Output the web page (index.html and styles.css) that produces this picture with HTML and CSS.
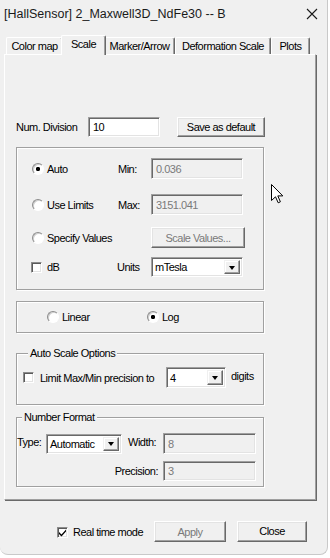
FILE: index.html
```html
<!DOCTYPE html>
<html>
<head>
<meta charset="utf-8">
<link rel="stylesheet" href="styles.css">
</head>
<body>
<div class="window">
  <div class="titlebar">
    <span class="title">[HallSensor] 2_Maxwell3D_NdFe30 -- B</span>
    <svg class="close" width="12" height="12" viewBox="0 0 12 12"><path d="M1 1 L11 11 M11 1 L1 11" stroke="#1a1a1a" stroke-width="1.1" fill="none"/></svg>
  </div>
  <div class="tabs">
    <div class="tab w1">Color map</div>
    <div class="tab sel w2">Scale</div>
    <div class="tab w3">Marker/Arrow</div>
    <div class="tab w4">Deformation Scale</div>
    <div class="tab w5">Plots</div>
  </div>
  <div class="panel">
    <div class="numrow">
      <span class="numlabel">Num. Division</span>
      <div class="field white numfield">10</div>
      <div class="btn savebtn">Save as default</div>
    </div>

    <div class="group g1">
      <div class="row r1">
        <div class="opt"><span class="radio checked"></span><span>Auto</span></div>
        <span class="lbl">Min:</span>
        <div class="field dis wide">0.036</div>
      </div>
      <div class="row r2">
        <div class="opt"><span class="radio"></span><span>Use Limits</span></div>
        <span class="lbl">Max:</span>
        <div class="field dis wide">3151.041</div>
      </div>
      <div class="row r3">
        <div class="opt"><span class="radio"></span><span>Specify Values</span></div>
        <span class="lbl"></span>
        <div class="btn dis scalebtn">Scale Values...</div>
      </div>
      <div class="row r4">
        <div class="opt"><span class="check"></span><span>dB</span></div>
        <span class="lbl units">Units</span>
        <div class="select wide"><span class="val">mTesla</span><span class="drop"><i></i></span></div>
      </div>
    </div>

    <div class="group g2">
      <div class="opt lin"><span class="radio"></span><span>Linear</span></div>
      <div class="opt"><span class="radio checked"></span><span>Log</span></div>
    </div>

    <div class="group g3">
      <div class="legend">Auto Scale Options</div>
      <div class="row prow">
        <span class="check"></span>
        <span class="plabel">Limit Max/Min precision to</span>
        <div class="select digsel"><span class="val">4</span><span class="drop"><i></i></span></div>
        <span class="digits">digits</span>
      </div>
    </div>

    <div class="group g4">
      <div class="legend">Number Format</div>
      <div class="nfgrid">
        <span class="typelbl">Type:</span>
        <div class="select typesel"><span class="val">Automatic</span><span class="drop"><i></i></span></div>
        <span class="widthlbl">Width:</span>
        <div class="field dis nf">8</div>
        <span class="preclbl">Precision:</span>
        <div class="field dis nf">3</div>
      </div>
    </div>
  </div>

  <div class="footer">
    <span class="check checked"><svg width="9" height="9" viewBox="0 0 9 9"><path d="M1 4 L3.5 6.5 L8 1.5 L8 3.5 L3.5 8.5 L1 6 Z" fill="#000"/></svg></span>
    <span class="rtlabel">Real time mode</span>
    <div class="btn dis applybtn">Apply</div>
    <div class="btn closebtn">Close</div>
  </div>

  <svg class="cursor" width="13" height="20" viewBox="0 0 13 20"><path d="M0.5 0.5 L0.5 16.5 L4.5 12.8 L7.2 18.8 L9.4 17.8 L6.8 11.9 L11.8 11.9 Z" fill="#fff" stroke="#000" stroke-width="1" stroke-linejoin="miter"/></svg>
</div>
</body>
</html>
```

FILE: styles.css
```css
* { box-sizing: border-box; }
html, body { margin: 0; padding: 0; }
body {
  width: 330px;
  height: 558px;
  background: #ffffff;
  font-family: "Liberation Sans", Arial, sans-serif;
  font-size: 11px;
  letter-spacing: -0.5px;
  color: #000;
  overflow: hidden;
}
.window {
  position: relative;
  width: 328px;
  height: 555px;
  background: #f0f0f0;
  border-right: 1px solid #c9c9c9;
  border-bottom: 1px solid #c9c9c9;
  border-radius: 0 0 8px 8px;
}
.titlebar {
  height: 27px;
  display: flex;
  align-items: center;
  justify-content: space-between;
  padding: 0 8px 0 4px;
}
.title {
  font-size: 12.5px;
  letter-spacing: 0;
  color: #1a1a1a;
}
.close { margin-top: 1px; margin-right: 1px; }

.tabs {
  margin-top: 8px;
  height: 19px;
  display: flex;
  align-items: flex-end;
  padding-left: 6px;
}
.tab {
  height: 17px;
  display: flex;
  align-items: center;
  justify-content: center;
  background: #f0f0f0;
  border-top: 1px solid #fff;
  border-left: 1px solid #fff;
  border-right: 1px solid #696969;
  border-radius: 2px 2px 0 0;
  box-shadow: inset -1px 0 0 #a0a0a0;
  padding-bottom: 1px;
}
.w1 { width: 57px; }
.w2 { width: 41px; }
.w3 { width: 71px; }
.w4 { width: 96px; }
.w5 { width: 39px; }
.tab.sel {
  position: relative;
  z-index: 2;
  height: 20px;
  width: 45px;
  margin: 0 -2px -1px -2px;
  padding-bottom: 4px;
}

.panel {
  margin-left: 4px;
  width: 312px;
  height: 446px;
  border-top: 1px solid #fff;
  border-left: 1px solid #fff;
  border-right: 1px solid #a0a0a0;
  border-bottom: 1px solid #a0a0a0;
  box-shadow: 1px 1px 0 #696969;
  padding: 62px 0 0 11px;
}

.numrow {
  display: flex;
  align-items: center;
  height: 20px;
}
.numlabel { width: 72px; }
.field {
  height: 21px;
  border: 1px solid;
  border-color: #a0a0a0 #fff #fff #a0a0a0;
  box-shadow: inset 1px 1px 0 #696969, inset -1px -1px 0 #e3e3e3;
  display: flex;
  align-items: center;
  padding-left: 4px;
}
.white { background: #fff; }
.dis { color: #7a7a7a; }
.numfield { width: 72px; height: 20px; }
.btn {
  height: 21px;
  display: flex;
  align-items: center;
  justify-content: center;
  background: #f0f0f0;
  border: 1px solid;
  border-color: #fff #696969 #696969 #fff;
  box-shadow: inset -1px -1px 0 #a0a0a0, inset 1px 1px 0 #e3e3e3;
}
.savebtn { width: 88px; height: 20px; margin-left: 17px; }

.group {
  width: 248px;
  border: 1px solid #a0a0a0;
  box-shadow: inset 1px 1px 0 #fff, 1px 1px 0 #fff;
}
.g1 {
  margin-top: 10px;
  height: 143px;
  padding: 10px 0 0 15px;
}
.row { display: flex; align-items: center; height: 21px; }
.r2 { margin-top: 15px; }
.r3 { margin-top: 12px; }
.r4 { margin-top: 9px; height: 20px; }
.opt { display: flex; align-items: center; width: 86px; }
.lbl { width: 33px; }
.units { margin-left: -1px; width: 34px; }
.wide { width: 92px; }
.scalebtn { width: 94px; }

.radio {
  width: 12px;
  height: 12px;
  border-radius: 50%;
  border: 1px solid;
  border-color: #8c8c8c #fff #fff #8c8c8c;
  background: #fff;
  box-shadow: inset 1px 1px 0 #d0d0d0;
  margin-right: 3px;
  flex: none;
}
.radio.checked {
  background: radial-gradient(circle, #000 0 1.9px, #fff 2.4px);
}
.check {
  width: 11px;
  height: 11px;
  border: 1px solid;
  border-color: #8c8c8c #fff #fff #8c8c8c;
  box-shadow: inset 1px 1px 0 #5a5a5a, inset -1px -1px 0 #e3e3e3;
  background: #fff;
  margin-right: 5px;
  flex: none;
  display: flex;
  align-items: center;
  justify-content: center;
}
.r4 .check { margin-left: -1px; margin-right: 5px; }

.select {
  height: 20px;
  background: #fff;
  border: 1px solid;
  border-color: #a0a0a0 #fff #fff #a0a0a0;
  box-shadow: inset 1px 1px 0 #696969, inset -1px -1px 0 #e3e3e3;
  display: flex;
  align-items: stretch;
  padding: 2px 2px 2px 2px;
}
.select .val { flex: 1; display: flex; align-items: center; padding-left: 1px; }
.select .drop {
  width: 16px;
  background: #f0f0f0;
  border: 1px solid;
  border-color: #f0f0f0 #696969 #696969 #f0f0f0;
  box-shadow: inset -1px -1px 0 #a0a0a0, inset 1px 1px 0 #fff;
  display: flex;
  align-items: center;
  justify-content: center;
}
.select .drop i {
  width: 0;
  height: 0;
  border-left: 3.5px solid transparent;
  border-right: 3.5px solid transparent;
  border-top: 4px solid #000;
  margin-top: 1px;
}

.g2 {
  margin-top: 11px;
  height: 32px;
  display: flex;
  align-items: center;
  padding-left: 30px;
}
.g2 .opt { width: auto; }
.g2 .lin { width: 100px; }

.legend {
  display: table;
  margin: -8px 0 0 5px;
  padding: 0 2px;
  background: #f0f0f0;
  line-height: 14px;
}
.g3 {
  margin-top: 20px;
  height: 52px;
  padding-left: 6px;
}
.prow { margin-top: 7px; }
.prow .check { margin-right: 6px; }
.plabel { width: 126px; }
.digsel { width: 60px; height: 21px; }
.digits { margin-left: 5px; margin-top: -3px; }

.g4 {
  margin-top: 12px;
  height: 70px;
}
.nfgrid {
  margin-top: 9px;
  display: grid;
  grid-template-columns: 29px 76px 41px 93px;
  grid-template-rows: 21px 20px;
  row-gap: 7px;
  align-items: center;
}
.typelbl { margin-top: -4px; }
.typesel { width: 76px; height: 20px; }
.widthlbl { padding-left: 6px; margin-top: -3px; }
.nf { width: 93px; }
.nfgrid .nf:last-child { height: 20px; }
.preclbl { grid-column: 1 / 4; text-align: right; padding-right: 5px; }

.footer {
  display: flex;
  align-items: center;
  margin-top: 21px;
  padding-left: 57px;
  height: 21px;
}
.footer .check { margin-right: 5px; margin-top: 1px; }
.rtlabel { width: 81px; margin-top: 1px; }
.applybtn { width: 72px; }
.closebtn { width: 70px; margin-left: 11px; margin-top: -1px; }

.cursor {
  position: absolute;
  left: 271px;
  top: 184px;
}
```
